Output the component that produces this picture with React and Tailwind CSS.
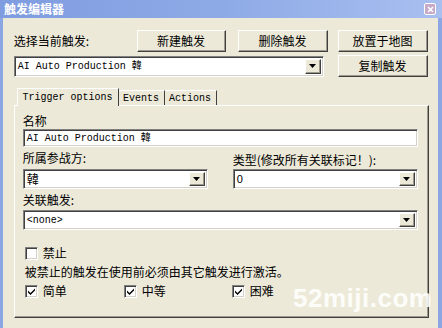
import React from 'react';

const cjk = "font-['SimSun','Noto_Sans_CJK_SC',sans-serif]";
const mono = "font-['Liberation_Mono','Noto_Sans_CJK_SC',monospace]";

const raised =
  'border border-t-white border-l-white border-r-[#404040] border-b-[#404040] shadow-[inset_-1px_-1px_0_#9d9a8c]';
const sunken =
  'border border-t-[#808080] border-l-[#808080] border-r-white border-b-white shadow-[inset_1px_1px_0_#404040,inset_-1px_-1px_0_#d4d0c8]';

function Button({ children, className = '' }) {
  return (
    <div className={`${raised} bg-[#ece9d8] flex items-center justify-center text-[12px] text-black ${className}`}>
      {children}
    </div>
  );
}

function Arrow() {
  return (
    <div className={`${raised} bg-[#ece9d8] w-[16px] h-full flex items-center justify-center`}>
      <svg width="7" height="4" viewBox="0 0 7 4">
        <path d="M0 0h7L3.5 4z" fill="#000" />
      </svg>
    </div>
  );
}

function Combo({ children, className = '', textClass = '' }) {
  return (
    <div className={`${sunken} bg-white h-[20px] flex items-stretch p-[2px] ${className}`}>
      <div className={`flex-1 flex items-center pl-[1px] text-black ${textClass}`}>{children}</div>
      <Arrow />
    </div>
  );
}

function Check({ checked, label, className = '' }) {
  return (
    <div className={`flex items-center gap-[5px] ${className}`}>
      <div className={`${sunken} w-[13px] h-[13px] bg-white flex items-center justify-center`}>
        {checked && (
          <svg width="7" height="7" viewBox="0 0 7 7">
            <path d="M0 2.5l2.5 2.5L7 0.5v2L2.5 7 0 4.5z" fill="#000" />
          </svg>
        )}
      </div>
      <span className="text-[12px] text-black">{label}</span>
    </div>
  );
}

export default function App() {
  return (
    <div className={`w-[442px] h-[328px] bg-[#ece9d8] flex flex-col overflow-hidden relative ${cjk}`}>
      {/* title bar */}
      <div className="h-[18px] bg-gradient-to-r from-[#7f9ce0] via-[#8eaae6] to-[#a8bff0] flex items-center justify-between pl-[4px] pr-[6px]">
        <span className="text-[12px] font-bold text-white leading-none">触发编辑器</span>
        <div className="w-[12px] h-[12px] rounded-[2px] border border-white bg-[#c7a9c8] flex items-center justify-center">
          <svg width="7" height="7" viewBox="0 0 7 7">
            <path d="M1 1l5 5M6 1L1 6" stroke="#fff" strokeWidth="1.6" />
          </svg>
        </div>
      </div>

      <div className="flex flex-1 min-h-0">
        <div className="w-[3px] bg-[#8ca6e4]" />
        <div className="flex-1 flex flex-col pl-[11px] pr-[9px] pt-[12px]">
          {/* row 1 */}
          <div className="flex items-center h-[22px]">
            <span className="w-[123px] text-[12px] text-black">选择当前触发:</span>
            <Button className="w-[89px] h-[22px]">新建触发</Button>
            <Button className="w-[90px] h-[22px] ml-[12px]">删除触发</Button>
            <Button className="w-[90px] h-[22px] ml-[10px]">放置于地图</Button>
          </div>
          {/* row 2 */}
          <div className="flex items-center mt-[3px] h-[22px]">
            <Combo className="w-[310px] h-[21px]" textClass={`${mono} text-[10px]`}>
              AI Auto Production 韓
            </Combo>
            <Button className="w-[90px] h-[22px] ml-[14px]">复制触发</Button>
          </div>

          {/* tabs */}
          <div className="mt-[10px] w-[415px] flex flex-col">
            <div className={`flex items-end h-[18px] pl-[3px] ${mono} text-[10px] text-black`}>
              <div className="h-[18px] w-[102px] border-t border-l border-white border-r border-r-[#404040] bg-[#ece9d8] flex items-center justify-center relative z-10 -mb-[1px] pb-[1px]">
                Trigger options
              </div>
              <div className="h-[15px] w-[46px] border-t border-white border-r border-r-[#404040] flex items-center justify-center">
                Events
              </div>
              <div className="h-[15px] w-[52px] border-t border-white border-r border-r-[#404040] flex items-center justify-center">
                Actions
              </div>
            </div>
            <div className="h-[213px] border border-t-white border-l-white border-r-[#404040] border-b-[#404040] shadow-[inset_-1px_-1px_0_#9d9a8c] pl-[8px] pr-[10px] pt-[7px] flex flex-col">
              <span className="text-[12px] text-black leading-[15px]">名称</span>
              <div className={`${sunken} bg-white h-[18px] mt-[1px] flex items-center pl-[3px] ${mono} text-[10px] text-black`}>
                AI Auto Production 韓
              </div>

              <div className="flex mt-[3px]">
                <div className="w-[185px] flex flex-col">
                  <span className="text-[12px] text-black leading-[15px]">所属参战方:</span>
                  <Combo className="mt-[4px] h-[19px]" textClass="text-[12px]">韓</Combo>
                </div>
                <div className="ml-[25px] flex-1 flex flex-col">
                  <span className="text-[12px] text-black leading-[15px] mt-[2px]">类型(修改所有关联标记！):</span>
                  <Combo className="mt-[2px] h-[19px]" textClass="text-[11px] font-['Liberation_Sans',sans-serif]">0</Combo>
                </div>
              </div>

              <span className="text-[12px] text-black leading-[15px] mt-[3px]">关联触发:</span>
              <Combo className="mt-[3px] h-[19px]" textClass={`${mono} text-[10px]`}>&lt;none&gt;</Combo>

              <Check className="mt-[14px] ml-[2px]" label="禁止" />
              <span className="text-[12px] text-black leading-[15px] mt-[2px] ml-[2px]">被禁止的触发在使用前必须由其它触发进行激活。</span>
              <div className="flex mt-[3px] ml-[2px]">
                <Check checked label="简单" className="w-[99px]" />
                <Check checked label="中等" className="w-[108px]" />
                <Check checked label="困难" />
              </div>
            </div>
          </div>
        </div>
        <div className="w-[5px] bg-[#8ca6e4]" />
      </div>

      <div className="absolute left-[293px] top-[279px] text-[26px] font-bold text-white/85 font-['Liberation_Sans',sans-serif] tracking-[0.5px]">
        52miji.com
      </div>
    </div>
  );
}
